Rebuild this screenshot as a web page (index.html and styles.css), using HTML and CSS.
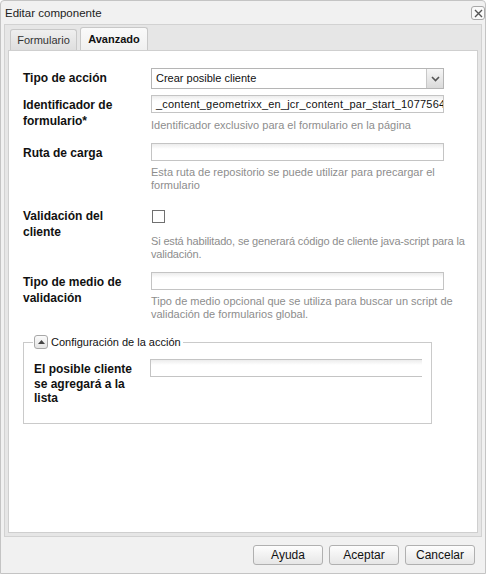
FILE: index.html
```html
<!DOCTYPE html>
<html lang="es">
<head>
<meta charset="utf-8">
<title>Editar componente</title>
<link rel="stylesheet" href="styles.css">
</head>
<body>
<div class="dialog">
  <div class="titlebar">
    <span class="title">Editar componente</span>
    <span class="close" aria-label="Cerrar">
      <svg width="9" height="9" viewBox="0 0 9 9"><path d="M1 1L8 8M8 1L1 8" stroke="#555" stroke-width="1.4"/></svg>
    </span>
  </div>
  <div class="tabpanel">
    <div class="tabstrip">
      <div class="tab">Formulario</div>
      <div class="tab active">Avanzado</div>
    </div>
    <div class="tabbody">
      <div class="row r1">
        <div class="label">Tipo de acción</div>
        <div class="field">
          <div class="select">
            <span class="select-text">Crear posible cliente</span>
            <span class="select-btn"><svg width="9" height="6" viewBox="0 0 9 6"><path d="M1 1L4.5 4.5L8 1" stroke="#555" stroke-width="1.6" fill="none"/></svg></span>
          </div>
        </div>
      </div>
      <div class="row r2">
        <div class="label">Identificador de formulario*</div>
        <div class="field">
          <div class="input input-id">_content_geometrixx_en_jcr_content_par_start_1077564</div>
          <div class="help h-id">Identificador exclusivo para el formulario en la página</div>
        </div>
      </div>
      <div class="row r3">
        <div class="label">Ruta de carga</div>
        <div class="field">
          <div class="input"></div>
          <div class="help">Esta ruta de repositorio se puede utilizar para precargar el formulario</div>
        </div>
      </div>
      <div class="row r4">
        <div class="label">Validación del cliente</div>
        <div class="field">
          <div class="checkbox"></div>
          <div class="help help-check">Si está habilitado, se generará código de cliente java-script para la validación.</div>
        </div>
      </div>
      <div class="row r5">
        <div class="label">Tipo de medio de validación</div>
        <div class="field">
          <div class="input"></div>
          <div class="help">Tipo de medio opcional que se utiliza para buscar un script de validación de formularios global.</div>
        </div>
      </div>
      <div class="fieldset">
        <div class="legend">
          <span class="toggle"><svg width="7" height="4" viewBox="0 0 7 4"><path d="M0 4L3.5 0L7 4Z" fill="#444"/></svg></span>
          <span class="legend-text">Configuración de la acción</span>
        </div>
        <div class="fs-row">
          <div class="label fs-label">El posible cliente se agregará a la lista</div>
          <div class="input fs-input"></div>
        </div>
      </div>
    </div>
  </div>
  <div class="footer">
    <button class="btn">Ayuda</button>
    <button class="btn">Aceptar</button>
    <button class="btn">Cancelar</button>
  </div>
</div>
</body>
</html>
```
FILE: styles.css
```css
* { box-sizing: border-box; }
body {
  margin: 0;
  background: #ffffff;
  font-family: "Liberation Sans", Arial, sans-serif;
  font-size: 11px;
  color: #111;
}
.dialog {
  width: 486px;
  height: 574px;
  background: #f1f1f1;
  border: 1px solid #c4c4c4;
  border-radius: 4px 4px 0 0;
  display: flex;
  flex-direction: column;
}
.titlebar {
  height: 23px;
  flex: none;
  display: flex;
  align-items: center;
  justify-content: space-between;
  padding: 0 0 0 4px;
}
.title {
  font-size: 11.5px;
  color: #222;
}
.close {
  width: 14px;
  height: 14px;
  margin-top: 1px;
  border: 1px solid #a8a8a8;
  border-radius: 3px;
  background: #fafafa;
  display: flex;
  align-items: center;
  justify-content: center;
}
.tabpanel {
  flex: none;
  margin: 0 3px;
  height: 513px;
  border: 1px solid #d2d2d2;
  background: #e6e6e6;
  display: flex;
  flex-direction: column;
  padding: 0 3px 3px 3px;
}
.tabstrip {
  height: 25px;
  display: flex;
  align-items: flex-end;
  gap: 3px;
  padding-left: 2px;
}
.tab {
  height: 21px;
  width: 67px;
  border: 1px solid #c8c8c8;
  border-bottom: none;
  border-radius: 3px 3px 0 0;
  background: linear-gradient(#efefef, #dedede);
  display: flex;
  align-items: center;
  justify-content: center;
  color: #333;
}
.tab.active {
  height: 23px;
  width: 68px;
  font-weight: bold;
  background: linear-gradient(#fafafa, #f0f0f0);
  color: #111;
}
.tabbody {
  flex: 1;
  background: #fff;
  border: 1px solid #cfcfcf;
  padding: 17px 0 0 14px;
}
.row {
  display: flex;
}
.r1 { margin-bottom: 6px; }
.r2 { margin-bottom: 11px; }
.r3 { margin-bottom: 14px; }
.r4 { margin-bottom: 11px; }
.label {
  width: 128px;
  flex: none;
  padding-right: 12px;
  font-weight: bold;
  font-size: 12px;
  line-height: 16px;
  color: #111;
  padding-top: 2px;
}
.field {
  width: 293px;
}
.select {
  height: 21px;
  border: 1px solid #b5b5b5;
  display: flex;
  background: #fff;
}
.select-text {
  flex: 1;
  font-size: 11px;
  line-height: 19px;
  padding-left: 4px;
  color: #111;
}
.select-btn {
  width: 17px;
  border-left: 1px solid #c8c8c8;
  background: linear-gradient(#f6f6f6, #dadada);
  display: flex;
  align-items: center;
  justify-content: center;
}
.input {
  height: 18px;
  border: 1px solid #c4c4c4;
  background: linear-gradient(#ececec, #ffffff 5px);
  font-size: 11px;
  line-height: 16px;
  padding-left: 4px;
  white-space: nowrap;
  overflow: hidden;
  color: #111;
}
.input-id { letter-spacing: 0.2px; }
.help {
  width: 312px;
  color: #8d8d8d;
  font-size: 11px;
  line-height: 13px;
  margin-top: 5px;
}
.h-id { margin-top: 6px; }
.checkbox {
  width: 13px;
  height: 13px;
  border: 1px solid #707070;
  margin: 4px 0 0 1px;
}
.help-check {
  margin-top: 12px;
  width: 322px;
  letter-spacing: -0.15px;
}
.fieldset {
  position: relative;
  margin: 21px 0 0 0;
  width: 409px;
  height: 82px;
  border: 1px solid #cacaca;
  padding: 16px 0 0 10px;
}
.legend {
  position: absolute;
  top: -8px;
  left: 9px;
  background: #fff;
  display: flex;
  align-items: center;
  gap: 3px;
  padding: 0 2px 0 1px;
  font-size: 11px;
  color: #111;
}
.toggle {
  width: 14px;
  height: 14px;
  border: 1px solid #a8a8a8;
  border-radius: 3px;
  background: linear-gradient(#fbfbfb, #e4e4e4);
  display: flex;
  align-items: center;
  justify-content: center;
}
.fs-row { display: flex; }
.fs-label {
  width: 116px;
  padding-right: 8px;
  line-height: 14.5px;
  padding-top: 3px;
}
.fs-input {
  width: 272px;
  border-right: none;
}
.footer {
  flex: 1;
  display: flex;
  justify-content: flex-end;
  align-items: flex-start;
  gap: 6px;
  padding: 8px 10px 0 0;
}
.btn {
  width: 70px;
  height: 20px;
  border: 1px solid #b0b0b0;
  border-radius: 3px;
  background: linear-gradient(#fdfdfd, #e6e6e6);
  font-family: "Liberation Sans", Arial, sans-serif;
  font-size: 12px;
  color: #111;
  padding: 0;
}
```
